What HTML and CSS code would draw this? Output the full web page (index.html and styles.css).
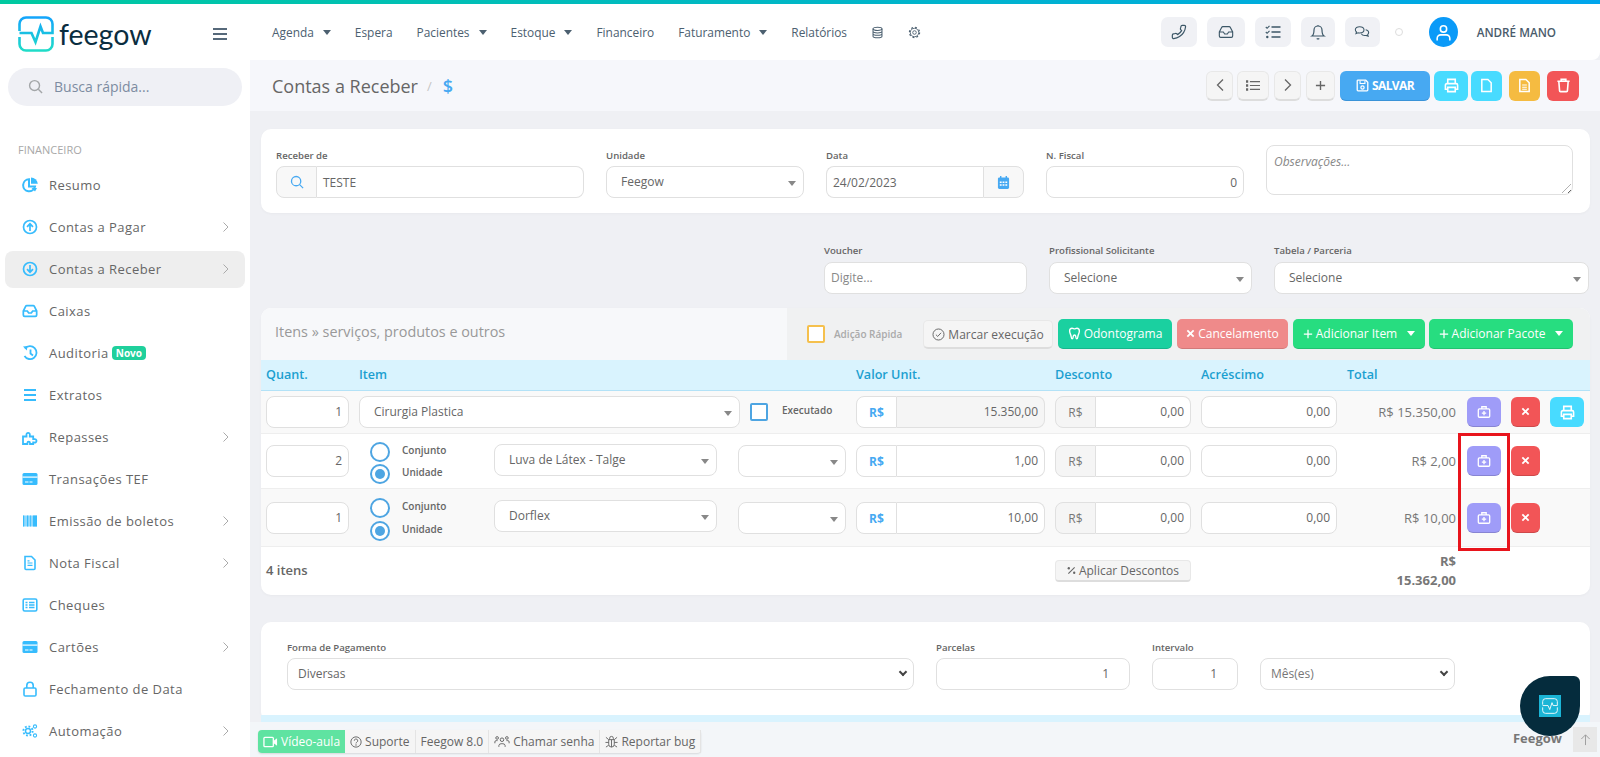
FILE: index.html
```html
<!DOCTYPE html>
<html lang="pt-BR">
<head>
<meta charset="utf-8">
<title>Contas a Receber - Feegow</title>
<link rel="stylesheet" href="styles.css">
</head>
<body>
<svg class="sprite" xmlns="http://www.w3.org/2000/svg">
  <defs>
    <linearGradient id="logo-grad" x1="0" y1="0" x2="0" y2="1"><stop offset="0" stop-color="#14a5fb"/><stop offset="1" stop-color="#1fdcc8"/></linearGradient>
  </defs>
  <symbol id="i-logo" viewBox="0 0 36 36"><path d="M1.5 15V8A6.5 6.5 0 0 1 8 1.5h20A6.5 6.5 0 0 1 34.500 8v9H25l-2.500-6.500L17.500 26l-4-9H1.500M1.500 21v7A6.500 6.500 0 0 0 8 34.500h20a6.500 6.500 0 0 0 6.500-6.500v-7"/></symbol>
  <symbol id="i-pie" viewBox="0 0 16 16"><path d="M7 2.200a6 6 0 1 0 6 7.300H7z" fill="none" stroke="currentColor" stroke-width="2"/><path d="M9 .5v6.200h6.800A7 7 0 0 0 9 .5z" fill="currentColor"/><path d="M9.500 11h5.500l-2 3.500z" fill="currentColor"/></symbol>
  <symbol id="i-up" viewBox="0 0 16 16"><circle cx="8" cy="8" r="6.500" fill="none" stroke="currentColor" stroke-width="1.700"/><path d="M8 12V5M5 7.800 8 4.800l3 3" fill="none" stroke="currentColor" stroke-width="1.700"/></symbol>
  <symbol id="i-down" viewBox="0 0 16 16"><circle cx="8" cy="8" r="6.500" fill="none" stroke="currentColor" stroke-width="1.700"/><path d="M8 4v7M5 8.200l3 3 3-3" fill="none" stroke="currentColor" stroke-width="1.700"/></symbol>
  <symbol id="i-inbox" viewBox="0 0 24 24"><path d="M22 12h-6l-2 3h-4l-2-3H2M5.450 5.110 2 12v6a2 2 0 0 0 2 2h16a2 2 0 0 0 2-2v-6l-3.450-6.890A2 2 0 0 0 16.760 4H7.240a2 2 0 0 0-1.790 1.110z" fill="none" stroke="currentColor" stroke-width="2.600"/></symbol>
  <symbol id="i-history" viewBox="0 0 16 16"><path d="M3 3.500A6.500 6.500 0 1 1 2.500 11" fill="none" stroke="currentColor" stroke-width="1.800"/><path d="M1 1.500 5.500 1 4.800 5.500z" fill="currentColor"/><path d="M8.500 4.500V8.500L11 10.500" fill="none" stroke="currentColor" stroke-width="1.800"/></symbol>
  <symbol id="i-bars" viewBox="0 0 16 16"><path d="M2 3h12M2 8h12M2 13h12" fill="none" stroke="currentColor" stroke-width="2"/></symbol>
  <symbol id="i-puzzle" viewBox="0 0 16 16"><path d="M1 7.500h3.500V6a1.700 1.700 0 1 1 3.300 0v1.500h3.400v2.700h1.200a1.700 1.700 0 1 1 0 3.300h-1.200V15H8V14a1.300 1.300 0 1 0-2.600 0v1H1z" fill="none" stroke="currentColor" stroke-width="1.800"/></symbol>
  <symbol id="i-card" viewBox="0 0 16 16"><rect x="0.500" y="2" width="15" height="12" rx="1.500" fill="currentColor"/><rect x="0.500" y="5.500" width="15" height="1.200" fill="#fff"/><rect x="3" y="10.500" width="3.500" height="1" fill="#fff"/><rect x="7.500" y="10.500" width="3" height="1" fill="#fff"/></symbol>
  <symbol id="i-barcode" viewBox="0 0 16 16"><rect x="1" y="2.500" width="14" height="11" fill="currentColor" opacity=".55"/><path d="M1 2.500h1.200v11H1zM5 2.500h1.200v11H5zM8 2.500h.8v11H8zM11 2.500h4v11h-4z" fill="currentColor"/></symbol>
  <symbol id="i-file" viewBox="0 0 16 16"><path d="M3 1.500h6.500L13 5v8.500a1 1 0 0 1-1 1H4a1 1 0 0 1-1-1z" fill="none" stroke="currentColor" stroke-width="1.600"/><path d="M5.500 8h5M5.500 10.300h5M5.500 5.800h2" fill="none" stroke="currentColor" stroke-width="1.200"/></symbol>
  <symbol id="i-listalt" viewBox="0 0 16 16"><rect x="1.200" y="2" width="13.600" height="12" rx="1.500" fill="none" stroke="currentColor" stroke-width="1.600"/><path d="M3.500 5.500h2M7 5.500h5.500M3.500 8h2M7 8h5.500M3.500 10.500h2M7 10.500h5.500" fill="none" stroke="currentColor" stroke-width="1.300"/></symbol>
  <symbol id="i-lock" viewBox="0 0 16 16"><rect x="2" y="7" width="12" height="8" rx="1.300" fill="none" stroke="currentColor" stroke-width="1.600"/><path d="M4.800 7V4.500a3.200 3.200 0 0 1 6.400 0V7" fill="none" stroke="currentColor" stroke-width="1.600"/></symbol>
  <symbol id="i-cogs" viewBox="0 0 16 16"><g fill="none" stroke="currentColor"><circle cx="6" cy="8" r="2.500" stroke-width="1.400"/><circle cx="6" cy="8" r="4.600" stroke-width="1.900" stroke-dasharray="1.800 1.800"/><circle cx="13" cy="3.500" r="1.600" stroke-width="1.100"/><circle cx="13" cy="12.500" r="1.600" stroke-width="1.100"/></g></symbol>
  <symbol id="i-chev" viewBox="0 0 8 12"><path d="M1.500 1.500 6 6l-4.500 4.500" fill="none" stroke="currentColor" stroke-width="1"/></symbol>
  <symbol id="i-search" viewBox="0 0 16 16"><circle cx="7" cy="7" r="5.300" fill="none" stroke="currentColor" stroke-width="1.500"/><path d="m11 11 4 4" fill="none" stroke="currentColor" stroke-width="1.500"/></symbol>
  <symbol id="i-phone" viewBox="0 0 24 24"><path transform="matrix(-1 0 0 1 24 0)" d="M22 16.920v3a2 2 0 0 1-2.180 2 19.790 19.790 0 0 1-8.630-3.070 19.500 19.500 0 0 1-6-6 19.790 19.790 0 0 1-3.070-8.670A2 2 0 0 1 4.110 2h3a2 2 0 0 1 2 1.720 12.840 12.840 0 0 0 .7 2.810 2 2 0 0 1-.45 2.110L8.090 9.910a16 16 0 0 0 6 6l1.270-1.270a2 2 0 0 1 2.110-.45 12.840 12.840 0 0 0 2.810.7A2 2 0 0 1 22 16.920z" fill="none" stroke="currentColor" stroke-width="1.800"/></symbol>
  <symbol id="i-inbox2" viewBox="0 0 24 24"><path d="M22 12h-6l-2 3h-4l-2-3H2M5.450 5.110 2 12v6a2 2 0 0 0 2 2h16a2 2 0 0 0 2-2v-6l-3.450-6.890A2 2 0 0 0 16.760 4H7.240a2 2 0 0 0-1.790 1.110z" fill="none" stroke="currentColor" stroke-width="1.700"/></symbol>
  <symbol id="i-tasks" viewBox="0 0 16 16"><path d="M6.500 3h9M6.500 8h9M6.500 13h9" fill="none" stroke="currentColor" stroke-width="1.300"/><path d="m.8 3 1.300 1.300L4.500 1.800M.8 8l1.300 1.300L4.500 6.800" fill="none" stroke="currentColor" stroke-width="1.100"/><circle cx="2.300" cy="13" r="1.200" fill="currentColor"/></symbol>
  <symbol id="i-bell" viewBox="0 0 24 24"><path d="M18 9A6 6 0 0 0 6 9c0 7-3 9-3 9h18s-3-2-3-9M13.730 21.500a2 2 0 0 1-3.460 0M12 3V1.500" fill="none" stroke="currentColor" stroke-width="1.800"/></symbol>
  <symbol id="i-chat" viewBox="0 0 24 24"><path d="M8.500 4C4.900 4 2 6 2 8.700c0 1.300.7 2.400 1.700 3.300L3 14.500l3-1.200c.8.200 1.600.3 2.500.3 3.600 0 6.500-2.100 6.500-4.900S12.100 4 8.500 4z" fill="none" stroke="currentColor" stroke-width="1.600"/><path d="M17.500 8.500c2.600.5 4.500 2.200 4.500 4.300 0 1.200-.6 2.200-1.500 3l.7 2.500-3-1.200c-2.700.5-6-.3-7.200-2.600" fill="none" stroke="currentColor" stroke-width="1.600"/></symbol>
  <symbol id="i-user" viewBox="0 0 24 24"><circle cx="12" cy="7.500" r="4" fill="none" stroke="currentColor" stroke-width="2"/><path d="M4 22v-2.500a4.500 4.500 0 0 1 4.500-4.500h7a4.500 4.500 0 0 1 4.500 4.500V22" fill="none" stroke="currentColor" stroke-width="2"/></symbol>
  <symbol id="i-db" viewBox="0 0 16 16"><g fill="none" stroke="currentColor" stroke-width="1.300"><ellipse cx="8" cy="3.500" rx="5.500" ry="2"/><path d="M2.500 3.500v9c0 1.100 2.500 2 5.500 2s5.500-.9 5.500-2v-9M2.500 6.500c0 1.100 2.500 2 5.500 2s5.500-.9 5.500-2M2.500 9.500c0 1.100 2.500 2 5.500 2s5.500-.9 5.500-2"/></g></symbol>
  <symbol id="i-gear" viewBox="0 0 16 16"><g fill="none" stroke="currentColor"><circle cx="8" cy="8" r="2.200" stroke-width="1.100"/><circle cx="8" cy="8" r="5.200" stroke-width="1.100"/><circle cx="8" cy="8" r="6.300" stroke-width="1.400" stroke-dasharray="2.300 2.650"/></g></symbol>
  <symbol id="i-prev" viewBox="0 0 10 14"><path d="M8 1.500 2.500 7 8 12.500" fill="none" stroke="currentColor" stroke-width="1.300"/></symbol>
  <symbol id="i-next" viewBox="0 0 10 14"><path d="M2 1.500 7.500 7 2 12.500" fill="none" stroke="currentColor" stroke-width="1.300"/></symbol>
  <symbol id="i-list" viewBox="0 0 16 12"><path d="M4.500 1.500H16M4.500 6H16M4.500 10.500H16" fill="none" stroke="currentColor" stroke-width="1.400"/><path d="M0 0h2.500v2.800H0zM0 4.600h2.500v2.800H0zM0 9.200h2.500V12H0z" fill="currentColor"/></symbol>
  <symbol id="i-plus" viewBox="0 0 12 12"><path d="M6 1v10M1 6h10" fill="none" stroke="currentColor" stroke-width="1.500"/></symbol>
  <symbol id="i-save" viewBox="0 0 16 16"><path d="M2 1.500h10l2.500 2.500v9.500a1 1 0 0 1-1 1h-11a1 1 0 0 1-1-1v-11a1 1 0 0 1 .5-1z" fill="none" stroke="currentColor" stroke-width="1.600"/><path d="M5 2v3.500h6V2" fill="none" stroke="currentColor" stroke-width="1.300"/><circle cx="8" cy="10.500" r="2" fill="none" stroke="currentColor" stroke-width="1.500"/></symbol>
  <symbol id="i-print" viewBox="0 0 16 16"><path d="M4 6V1.500h8V6M4 12H1.500V7.500a1.500 1.500 0 0 1 1.500-1.500h10a1.500 1.500 0 0 1 1.500 1.500V12H12M4 10h8v4.500H4z" fill="none" stroke="currentColor" stroke-width="1.700"/></symbol>
  <symbol id="i-doc" viewBox="0 0 16 16"><path d="M3 1.500h6.500L13 5v9.500H3z" fill="none" stroke="currentColor" stroke-width="1.600"/></symbol>
  <symbol id="i-doctext" viewBox="0 0 16 16"><path d="M3 1.500h6.500L13 5v9.500H3z" fill="none" stroke="currentColor" stroke-width="1.600"/><path d="M5.500 7.500h5M5.500 9.800h5M5.500 12h5" fill="none" stroke="currentColor" stroke-width="1.100"/></symbol>
  <symbol id="i-trash" viewBox="0 0 16 16"><path d="M1.500 3.500h13M5.500 3.500v-2h5v2M3 3.500l.8 10a1 1 0 0 0 1 1h6.400a1 1 0 0 0 1-1l.8-10" fill="none" stroke="currentColor" stroke-width="1.700"/></symbol>
  <symbol id="i-cal" viewBox="0 0 14 16"><rect x="1" y="2.500" width="12" height="12.500" rx="1.500" fill="currentColor"/><path d="M4 1v3M10 1v3" stroke="currentColor" stroke-width="1.500"/><path d="M3 7h2v1.500H3zM6 7h2v1.500H6zM9 7h2v1.500H9zM3 10h2v1.500H3zM6 10h2v1.500H6zM9 10h2v1.500H9z" fill="#fff"/></symbol>
  <symbol id="i-check" viewBox="0 0 16 16"><circle cx="8" cy="8" r="6.800" fill="none" stroke="currentColor" stroke-width="1.200"/><path d="m4.800 8.200 2.200 2.200 4.200-4.500" fill="none" stroke="currentColor" stroke-width="1.200"/></symbol>
  <symbol id="i-tooth" viewBox="0 0 14 16"><path d="M4 1.500C2 1.500 1 3 1 5c0 3 1.500 4 1.800 6.500.2 1.500.5 3 1.500 3s1-2 1.200-3.300c.2-1 .5-1.400 1.500-1.400s1.300.4 1.500 1.400c.2 1.300.2 3.300 1.200 3.300s1.300-1.500 1.500-3C11.500 9 13 8 13 5c0-2-1-3.500-3-3.500-1.500 0-2 .8-3 .8s-1.500-.8-3-.8z" fill="none" stroke="currentColor" stroke-width="1.700"/></symbol>
  <symbol id="i-x" viewBox="0 0 10 10"><path d="m1.500 1.500 7 7M8.500 1.500l-7 7" fill="none" stroke="currentColor" stroke-width="2"/></symbol>
  <symbol id="i-kit" viewBox="0 0 16 16"><rect x="1.500" y="4.500" width="13" height="9.500" rx="1.200" fill="none" stroke="currentColor" stroke-width="1.500"/><path d="M5.500 4.500V2h5v2.500M8 6.800v4.900M5.500 9.200h5" fill="none" stroke="currentColor" stroke-width="1.500"/></symbol>
  <symbol id="i-percent" viewBox="0 0 10 10"><path d="m1.500 8.500 7-7" fill="none" stroke="currentColor" stroke-width="1.200"/><circle cx="2" cy="2.500" r="1.300" fill="currentColor"/><circle cx="8" cy="7.500" r="1.300" fill="currentColor"/></symbol>
  <symbol id="i-video" viewBox="0 0 16 12"><rect x="1" y="1" width="10" height="10" rx="1" fill="none" stroke="currentColor" stroke-width="1.400"/><path d="m11 5 4-3v8l-4-3z" fill="currentColor"/></symbol>
  <symbol id="i-help" viewBox="0 0 14 14"><circle cx="7" cy="7" r="6" fill="none" stroke="currentColor" stroke-width="1.100"/><path d="M5 5.500a2 2 0 1 1 3 1.700c-.7.400-1 .8-1 1.500" fill="none" stroke="currentColor" stroke-width="1.100"/><circle cx="7" cy="10.500" r=".8" fill="currentColor"/></symbol>
  <symbol id="i-users" viewBox="0 0 18 14"><g fill="none" stroke="currentColor" stroke-width="1.100"><circle cx="9" cy="5" r="2"/><path d="M5.500 13v-1.500a2.500 2.500 0 0 1 2.500-2h2a2.500 2.500 0 0 1 2.500 2V13"/><circle cx="3.500" cy="3" r="1.500"/><circle cx="14.500" cy="3" r="1.500"/><path d="M1 9V7.500A1.500 1.500 0 0 1 2.500 6H4M17 9V7.500A1.500 1.500 0 0 0 15.500 6H14"/></g></symbol>
  <symbol id="i-bug" viewBox="0 0 14 14"><g fill="none" stroke="currentColor" stroke-width="1"><path d="M4 5h6v5a3 3 0 0 1-6 0zM5 5V3.500a2 2 0 0 1 4 0V5M7 5v8M1 2.500 4 5M13 2.500 10 5M.5 8H4M13.500 8H10M1 13l3-2M13 13l-3-2"/></g></symbol>
  <symbol id="i-arrowup" viewBox="0 0 12 14"><path d="M6 13V2M1.500 6.500 6 2l4.500 4.500" fill="none" stroke="currentColor" stroke-width="1"/></symbol>
</svg>

<div class="topline"></div>
<div class="shell">
  <aside class="sidebar">
    <div class="brand">
      <svg class="brand-logo"><use href="#i-logo"/></svg>
      <span class="brand-name">feegow</span>
      <span class="burger"><i></i><i></i><i></i></span>
    </div>
    <div class="quick-search">
      <svg class="quick-search-icon"><use href="#i-search"/></svg>
      <span>Busca rápida...</span>
    </div>
    <div class="side-title">FINANCEIRO</div>
    <nav class="side-menu">
      <a class="side-item"><svg class="side-icon"><use href="#i-pie"/></svg><span>Resumo</span></a>
      <a class="side-item"><svg class="side-icon"><use href="#i-up"/></svg><span>Contas a Pagar</span><svg class="side-chev"><use href="#i-chev"/></svg></a>
      <a class="side-item is-active"><svg class="side-icon"><use href="#i-down"/></svg><span>Contas a Receber</span><svg class="side-chev"><use href="#i-chev"/></svg></a>
      <a class="side-item"><svg class="side-icon"><use href="#i-inbox"/></svg><span>Caixas</span></a>
      <a class="side-item"><svg class="side-icon"><use href="#i-history"/></svg><span>Auditoria</span><b class="badge-new">Novo</b></a>
      <a class="side-item"><svg class="side-icon"><use href="#i-bars"/></svg><span>Extratos</span></a>
      <a class="side-item"><svg class="side-icon"><use href="#i-puzzle"/></svg><span>Repasses</span><svg class="side-chev"><use href="#i-chev"/></svg></a>
      <a class="side-item"><svg class="side-icon"><use href="#i-card"/></svg><span>Transações TEF</span></a>
      <a class="side-item"><svg class="side-icon"><use href="#i-barcode"/></svg><span>Emissão de boletos</span><svg class="side-chev"><use href="#i-chev"/></svg></a>
      <a class="side-item"><svg class="side-icon"><use href="#i-file"/></svg><span>Nota Fiscal</span><svg class="side-chev"><use href="#i-chev"/></svg></a>
      <a class="side-item"><svg class="side-icon"><use href="#i-listalt"/></svg><span>Cheques</span></a>
      <a class="side-item"><svg class="side-icon"><use href="#i-card"/></svg><span>Cartões</span><svg class="side-chev"><use href="#i-chev"/></svg></a>
      <a class="side-item"><svg class="side-icon"><use href="#i-lock"/></svg><span>Fechamento de Data</span></a>
      <a class="side-item"><svg class="side-icon"><use href="#i-cogs"/></svg><span>Automação</span><svg class="side-chev"><use href="#i-chev"/></svg></a>
    </nav>
  </aside>

  <main class="main">
    <header class="navbar">
      <nav class="nav-links">
        <a class="nav-link">Agenda<i class="tri"></i></a>
        <a class="nav-link">Espera</a>
        <a class="nav-link">Pacientes<i class="tri"></i></a>
        <a class="nav-link">Estoque<i class="tri"></i></a>
        <a class="nav-link">Financeiro</a>
        <a class="nav-link">Faturamento<i class="tri"></i></a>
        <a class="nav-link">Relatórios</a>
        <a class="nav-link"><svg class="nav-icon"><use href="#i-db"/></svg></a>
        <a class="nav-link"><svg class="nav-icon"><use href="#i-gear"/></svg></a>
      </nav>
      <div class="nav-right">
        <span class="tool-box w36"><svg><use href="#i-phone"/></svg></span>
        <span class="tool-box w38"><svg><use href="#i-inbox2"/></svg></span>
        <span class="tool-box w36"><svg><use href="#i-tasks"/></svg></span>
        <span class="tool-box w34"><svg><use href="#i-bell"/></svg></span>
        <span class="tool-box w35"><svg><use href="#i-chat"/></svg></span>
        <span class="status-dot"></span>
        <span class="avatar"><svg><use href="#i-user"/></svg></span>
        <span class="user-name">ANDRÉ MANO</span>
      </div>
    </header>

    <section class="page-head">
      <div class="crumbs"><h1>Contas a Receber</h1><span class="crumb-sep">/</span><span class="crumb-icon">$</span></div>
      <div class="page-actions">
        <button class="pa pa-light w27"><svg class="ic-nav"><use href="#i-prev"/></svg></button>
        <button class="pa pa-light w32 tuck-1"><svg class="ic-list"><use href="#i-list"/></svg></button>
        <button class="pa pa-light w27"><svg class="ic-nav"><use href="#i-next"/></svg></button>
        <button class="pa pa-light w29"><svg class="ic-plus"><use href="#i-plus"/></svg></button>
        <button class="pa pa-blue w90"><svg class="ic-13"><use href="#i-save"/></svg>SALVAR</button>
        <button class="pa pa-cyan w34 tuck-1"><svg class="ic-15"><use href="#i-print"/></svg></button>
        <button class="pa pa-cyan w31 tuck-2"><svg class="ic-15"><use href="#i-doc"/></svg></button>
        <button class="pa pa-amber w31 gap-l"><svg class="ic-15"><use href="#i-doctext"/></svg></button>
        <button class="pa pa-red w32 gap-l"><svg class="ic-15"><use href="#i-trash"/></svg></button>
      </div>
    </section>

    <div class="content">
      <section class="panel panel-top">
        <div class="fld"><label>Receber de</label>
          <div class="group"><span class="addon addon-search"><svg class="ic-14"><use href="#i-search"/></svg></span><div class="input grow">TESTE</div></div>
        </div>
        <div class="fld"><label>Unidade</label><div class="select">Feegow</div></div>
        <div class="fld"><label>Data</label>
          <div class="group"><div class="input grow">24/02/2023</div><span class="addon addon-cal"><svg class="ic-cal"><use href="#i-cal"/></svg></span></div>
        </div>
        <div class="fld"><label>N. Fiscal</label><div class="input right">0</div></div>
        <div class="textarea">Observações...</div>
      </section>

      <section class="filters">
        <div class="fld"><label>Voucher</label><div class="input placeholder">Digite...</div></div>
        <div class="fld"><label>Profissional Solicitante</label><div class="select">Selecione</div></div>
        <div class="fld"><label>Tabela / Parceria</label><div class="select">Selecione</div></div>
      </section>

      <section class="panel panel-items">
        <div class="items-head">
          <div class="items-title">Itens » serviços, produtos e outros</div>
          <div class="items-actions">
            <span class="quick-check"></span>
            <span class="quick-label">Adição Rápida</span>
            <button class="ib ib-light"><svg class="ic-13"><use href="#i-check"/></svg>Marcar execução</button>
            <button class="ib ib-teal"><svg class="ic-13"><use href="#i-tooth"/></svg>Odontograma</button>
            <button class="ib ib-rose"><svg class="ic-9"><use href="#i-x"/></svg>Cancelamento</button>
            <button class="ib ib-green w-item"><svg class="ic-10"><use href="#i-plus"/></svg>Adicionar Item<i class="tri tri-white"></i></button>
            <button class="ib ib-green w-pack"><svg class="ic-10"><use href="#i-plus"/></svg>Adicionar Pacote<i class="tri tri-white"></i></button>
          </div>
        </div>

        <div class="grid-row items-thead">
          <span>Quant.</span><span>Item</span><span>Valor Unit.</span><span>Desconto</span><span>Acréscimo</span><span>Total</span>
        </div>

        <div class="grid-row line line-a">
          <div class="input right">1</div>
          <div class="cell-item">
            <div class="select grow">Cirurgia Plastica</div>
            <span class="exec-check"></span>
            <span class="exec-label">Executado</span>
          </div>
          <div class="group"><span class="addon addon-rs">R$</span><div class="input right grow is-disabled">15.350,00</div></div>
          <div class="group"><span class="addon addon-gray">R$</span><div class="input right grow">0,00</div></div>
          <div class="input right">0,00</div>
          <div class="total">R$ 15.350,00</div>
          <div class="row-actions">
            <button class="rb rb-purple"><svg class="ic-14"><use href="#i-kit"/></svg></button>
            <button class="rb rb-red"><svg class="ic-9"><use href="#i-x"/></svg></button>
            <button class="rb rb-cyan"><svg class="ic-15"><use href="#i-print"/></svg></button>
          </div>
        </div>

        <div class="grid-row line line-b">
          <div class="input right">2</div>
          <div class="cell-product">
            <div class="radios">
              <div class="radio-line"><span class="radio"></span><span class="radio-label">Conjunto</span></div>
              <div class="radio-line"><span class="radio is-on"></span><span class="radio-label">Unidade</span></div>
            </div>
            <div class="select prod">Luva de Látex - Talge</div>
            <div class="select small"></div>
          </div>
          <div class="group"><span class="addon addon-rs">R$</span><div class="input right grow">1,00</div></div>
          <div class="group"><span class="addon addon-gray">R$</span><div class="input right grow">0,00</div></div>
          <div class="input right">0,00</div>
          <div class="total">R$ 2,00</div>
          <div class="row-actions">
            <button class="rb rb-purple"><svg class="ic-14"><use href="#i-kit"/></svg></button>
            <button class="rb rb-red"><svg class="ic-9"><use href="#i-x"/></svg></button>
          </div>
        </div>

        <div class="grid-row line line-c">
          <div class="input right">1</div>
          <div class="cell-product">
            <div class="radios">
              <div class="radio-line"><span class="radio"></span><span class="radio-label">Conjunto</span></div>
              <div class="radio-line"><span class="radio is-on"></span><span class="radio-label">Unidade</span></div>
            </div>
            <div class="select prod">Dorflex</div>
            <div class="select small"></div>
          </div>
          <div class="group"><span class="addon addon-rs">R$</span><div class="input right grow">10,00</div></div>
          <div class="group"><span class="addon addon-gray">R$</span><div class="input right grow">0,00</div></div>
          <div class="input right">0,00</div>
          <div class="total">R$ 10,00</div>
          <div class="row-actions">
            <button class="rb rb-purple"><svg class="ic-14"><use href="#i-kit"/></svg></button>
            <button class="rb rb-red"><svg class="ic-9"><use href="#i-x"/></svg></button>
          </div>
        </div>

        <div class="grid-row items-foot">
          <div class="count">4 itens</div>
          <div></div><div></div>
          <button class="apply"><svg class="ic-9"><use href="#i-percent"/></svg>Aplicar Descontos</button>
          <div></div>
          <div class="grand">R$<br>15.362,00</div>
        </div>

        <div class="highlight"></div>
      </section>

      <section class="panel panel-pay">
        <div class="pay-fields">
          <div class="fld"><label>Forma de Pagamento</label><div class="select native">Diversas</div></div>
          <div class="fld"><label>Parcelas</label><div class="input right pad-r">1</div></div>
          <div class="fld"><label>Intervalo</label><div class="input right pad-r">1</div></div>
          <div class="fld"><label class="label-blank">&nbsp;</label><div class="select native muted">Mês(es)</div></div>
        </div>
        <div class="pay-strip"></div>
      </section>
    </div>
  </main>
</div>

<footer class="statusbar">
  <div class="status-group">
    <a class="sb sb-video"><svg class="ic-video"><use href="#i-video"/></svg>Vídeo-aula</a>
    <a class="sb"><svg class="ic-12"><use href="#i-help"/></svg>Suporte</a>
    <a class="sb">Feegow 8.0</a>
    <a class="sb"><svg class="ic-users"><use href="#i-users"/></svg>Chamar senha</a>
    <a class="sb"><svg class="ic-13 "><use href="#i-bug"/></svg>Reportar bug</a>
  </div>
  <div class="status-right">
    <span class="status-brand">Feegow</span>
    <span class="to-top"><svg class="ic-13"><use href="#i-arrowup"/></svg></span>
  </div>
</footer>

<div class="chat-bubble"><span class="chat-square"><svg><use href="#i-logo"/></svg></span></div>
</body>
</html>
```

FILE: styles.css
```css
* { box-sizing: border-box; }
html, body { margin: 0; height: 100%; overflow: hidden; }
body { font-family: "Open Sans", "Liberation Sans", sans-serif; font-size: 12px; color: #666; background: #eff0f4; }
.sprite { width: 0; height: 0; position: absolute; }
button { font-family: inherit; border: 0; padding: 0; cursor: pointer; }
label { display: block; }
svg { display: block; flex: none; }

.topline { height: 4px; background: linear-gradient(90deg, #00c9a0, #00a5ec); }
.shell { display: grid; grid-template-columns: 250px 1fr; height: 753px; }

/* sidebar */
.sidebar { background: #fff; }
.brand { display: flex; align-items: center; height: 64px; padding: 0 0 4px 18px; }
.brand-logo { width: 36px; height: 36px; fill: none; stroke: url(#logo-grad); stroke-width: 2.6; }
.brand-name { font-family: Lato, "Open Sans", sans-serif; font-size: 28.5px; color: #0a2d40; margin-left: 5px; line-height: 36px; width: 154px; }
.burger { display: flex; flex-direction: column; gap: 3px; width: 14px; }
.burger i { display: block; height: 2px; background: #56697a; }
.quick-search { display: flex; align-items: center; gap: 11px; height: 38px; margin: 0 8px; padding: 0 0 1px 20px; background: #eff0f5; border-radius: 19px; font-size: 14px; color: #7d8ca1; }
.quick-search-icon { width: 15px; height: 15px; color: #a3a6a8; }
.side-title { margin: 36px 0 10px 18px; line-height: 15px; font-size: 11px; color: #a8a8a8; }
.side-menu { display: flex; flex-direction: column; gap: 5px; margin: 0 5px; }
.side-item { display: flex; align-items: center; height: 37px; padding: 0 15px 2px 17px; border-radius: 8px; font-size: 13px; letter-spacing: .45px; color: #666; }
.side-item.is-active { background: #eee; }
.side-icon { width: 16px; height: 16px; margin-right: 11px; color: #37bcfd; }
.side-chev { width: 8px; height: 12px; margin-left: auto; color: #aaa; }
.badge-new { margin-left: 3px; padding: 0 4px; height: 14px; line-height: 14px; border-radius: 4px; background: #1fd09c; color: #fff; font-size: 10px; font-weight: 700; letter-spacing: 0; }

/* navbar */
.navbar { display: flex; align-items: center; height: 56px; padding: 0 44px 0 22px; background: #fff; border-bottom-right-radius: 8px; }
.nav-links { display: flex; align-items: center; gap: 24px; }
.nav-link { display: flex; align-items: center; font-size: 11.9px; color: #4c6070; }
.nav-icon { width: 13px; height: 13px; }
.tri { width: 0; height: 0; margin-left: 9px; border: 4px solid transparent; border-top: 5px solid #4c6070; border-bottom: 0; }
.tri-white { border-top-color: #fff; }
.nav-right { display: flex; align-items: center; margin-left: auto; }
.tool-box { display: flex; align-items: center; justify-content: center; height: 30px; margin-right: 10px; border-radius: 7px; background: #f0f1f5; color: #3c5767; }
.tool-box svg { width: 16px; height: 16px; }
.w36 { width: 36px; } .w38 { width: 38px; } .w34 { width: 34px; } .w35 { width: 35px; }
.status-dot { width: 8px; height: 8px; margin: 0 26px 0 5px; border: 1px solid #ddd; border-radius: 50%; }
.avatar { display: flex; align-items: center; justify-content: center; width: 29px; height: 30px; margin-right: 19px; border-radius: 50%; background: #0a9af8; color: #fff; }
.avatar svg { width: 19px; height: 19px; }
.user-name { font-weight: 600; font-size: 11.7px; color: #4a5b6b; }

/* page header */
.page-head { display: flex; align-items: center; justify-content: space-between; height: 51px; padding: 0 21px 0 22px; background: #f6f7fb; }
.crumbs { display: flex; align-items: center; }
.crumbs h1 { margin: 0; font-size: 18px; font-weight: 400; color: #666; }
.crumb-sep { margin: 0 11px 0 9px; color: #c5c5c5; font-size: 13px; }
.crumb-icon { color: #47a9f2; font-size: 18px; font-weight: 600; }
.page-actions { display: flex; gap: 5px; }
.pa { display: flex; align-items: center; justify-content: center; gap: 3px; height: 30px; border-radius: 6px; color: #fff; font-size: 12px; font-weight: 700; }
.pa-light { background: #f5f5f5; color: #666; border: 1px solid #e8e8e8; border-bottom: 2px solid #ddd; }
.pa-blue { background: #47a9f2; border-bottom: 1px solid #3a93d8; letter-spacing: -.6px; }
.pa-cyan { background: #48dbff; }
.pa-amber { background: #f5bb41; }
.pa-red { background: #f25557; }
.tuck-1 { margin-left: -1px; } .tuck-2 { margin-left: -2px; }
.gap-l { margin-left: 2px; }
.w27 { width: 27px; } .w32 { width: 32px; } .w29 { width: 29px; } .w90 { width: 90px; } .w31 { width: 31px; }
.ic-nav { width: 10px; height: 14px; } .ic-list { width: 14px; height: 11px; } .ic-plus { width: 11px; height: 11px; }
.ic-15 { width: 15px; height: 15px; } .ic-14 { width: 14px; height: 14px; } .ic-13 { width: 13px; height: 13px; }
.ic-12 { width: 12px; height: 12px; } .ic-10 { width: 10px; height: 10px; } .ic-9 { width: 9px; height: 9px; }
.ic-cal { width: 13px; height: 15px; }
.ic-video { width: 15px; height: 12px; } .ic-users { width: 16px; height: 13px; }

/* content */
.content { padding: 18px 10px 0 11px; }
.panel { background: #fff; border-radius: 10px; box-shadow: 0 1px 3px rgba(0, 0, 0, .03); }
.fld label { height: 15px; line-height: 15px; margin-bottom: 4px; font-size: 9.6px; font-weight: 600; color: #666; }
.input, .select, .textarea { height: 32px; line-height: 30px; background: #fff; border: 1px solid #e0e0e0; border-radius: 8px; padding: 0 6px; font-size: 12px; color: #666; }
.right { text-align: right; }
.grow { flex: 1; min-width: 0; }
.placeholder { color: #888; }
.pad-r { padding-right: 20px; }
.is-disabled { background: #f5f5f5; }
.select { position: relative; padding-left: 14px; white-space: nowrap; }
.select::after { content: ""; position: absolute; right: 7px; top: 14px; border: 4px solid transparent; border-top: 5px solid #888; border-bottom: 0; }
.select.native { padding-left: 10px; }
.select.native::after { right: 7px; top: 10px; width: 4px; height: 4px; border: 0; border-right: 2px solid #444; border-bottom: 2px solid #444; transform: rotate(45deg); }
.select.muted { color: #777; }
.textarea { position: relative; height: 50px; line-height: 18px; padding: 7px; font-style: italic; color: #888; margin-top: -3px; }
.textarea::after { content: ""; position: absolute; right: 1px; bottom: 1px; width: 9px; height: 9px; background: repeating-linear-gradient(135deg, transparent 0 2px, #666 2px 3px, transparent 3px 4px); clip-path: polygon(100% 0, 100% 100%, 0 100%); }
.group { display: flex; height: 32px; }
.group .input { border-radius: 0 8px 8px 0; border-left: 0; }
.group .addon:last-child { border-radius: 0 8px 8px 0; border-left: 1px solid #e0e0e0; border-right: 1px solid #e0e0e0; }
.group .input:first-child { border-radius: 8px 0 0 8px; border-left: 1px solid #e0e0e0; border-right: 0; }
.addon { display: flex; align-items: center; justify-content: center; flex: none; height: 32px; width: 41px; border: 1px solid #e0e0e0; border-radius: 8px 0 0 8px; background: #f8f8f8; font-size: 12px; color: #777; }
.addon-search { color: #47a9f2; }
.addon-cal { color: #47a9f2; }
.addon-rs { background: #fff; color: #47a9f2; font-weight: 700; }
.addon-gray { background: #f5f5f5; }

.panel-top { display: grid; grid-template-columns: 308px 198px 198px 198px 307px; column-gap: 22px; height: 84px; padding: 19px 0 0 15px; align-items: start; }
.panel-top label { margin-bottom: 3px; }
.panel-top .input { line-height: 32px; }
.filters { display: grid; grid-template-columns: 203px 203px 315px; column-gap: 22px; justify-content: end; margin-top: 30px; padding-right: 1px; height: 65px; }

/* items */
.panel-items { position: relative; height: 287px; }
.items-head { display: flex; height: 52px; }
.items-title { width: 526px; padding: 14px 0 0 14px; background: #f7f8fa; border-top-left-radius: 10px; font-size: 14.4px; line-height: 20px; color: #999; }
.items-actions { flex: 1; display: flex; align-items: flex-start; padding: 11px 0 0 20px; background: #f0f1f2; border-top-right-radius: 10px; }
.quick-check { width: 18px; height: 18px; margin-top: 6px; background: #fff; border: 2px solid #f5c04d; border-radius: 2px; }
.quick-label { width: 88px; margin: 8px 0 0 9px; font-size: 10px; font-weight: 600; line-height: 14px; color: #aaa; }
.ib { display: flex; align-items: center; justify-content: center; gap: 3px; height: 30px; margin-right: 4px; border-radius: 5px; color: #fff; font-size: 12px; font-weight: 500; white-space: nowrap; border-bottom: 1px solid rgba(0, 0, 0, .12); }
.ib-light { width: 130px; height: 29px; margin: 1px 5px 0 1px; background: #f5f5f5; color: #666; font-weight: 400; border: 1px solid #e8e8e8; border-bottom: 2px solid #ddd; }
.ib-teal { width: 114px; margin-right: 5px; background: #1ad0a0; }
.ib-rose { width: 111px; margin-right: 5px; background: #ef8a8a; }
.ib-green { background: #27dd80; }
.w-item { width: 132px; } .w-pack { width: 144px; margin-right: 0; }
.ib .tri { margin-left: 7px; }

.grid-row { display: grid; grid-template-columns: 83px 487px 189px 136px 136px 109px 1fr; column-gap: 10px; padding-left: 5px; align-items: start; }
.items-thead { height: 31px; line-height: 29px; background: #d9f3fe; border-bottom: 1px solid #b3e2f7; font-size: 12.6px; font-weight: 600; color: #1c9fd0; }
.line { border-bottom: 1px solid #eee; }
.line-a { height: 43px; padding-top: 5px; background: #f9f9f9; }
.line-b { height: 55px; padding-top: 11px; }
.line-c { height: 58px; padding-top: 13px; background: #f9f9f9; }
.cell-item { display: flex; align-items: flex-start; }
.exec-check { width: 18px; height: 18px; margin: 7px 0 0 10px; background: #fff; border: 2px solid #4ea5e2; border-radius: 2px; }
.exec-label { width: 64px; margin: 7px 0 0 14px; font-size: 10px; font-weight: 600; line-height: 14px; color: #666; }
.cell-product { display: flex; align-items: flex-start; }
.radios { display: flex; flex-direction: column; gap: 2px; width: 124px; margin: -3px 0 0 11px; }
.line-c .radios { gap: 3px; margin-top: -4px; }
.radio-line { display: flex; align-items: flex-start; height: 20px; }
.radio { position: relative; width: 20px; height: 20px; border: 2px solid #4ea5e2; border-radius: 50%; background: #fff; }
.radio.is-on::after { content: ""; position: absolute; left: 3px; top: 3px; width: 10px; height: 10px; border-radius: 50%; background: #4ea5e2; }
.radio-label { width: 60px; margin: 0 0 0 12px; font-size: 10px; font-weight: 600; line-height: 17px; color: #666; }
.select.prod { width: 223px; margin-top: -1px; }
.line-c .select.prod { margin-top: -2px; }
.select.small { width: 108px; margin-left: 21px; }
.total { line-height: 32px; text-align: right; color: #777; font-size: 13px; }
.row-actions { display: flex; gap: 10px; margin: 1px 0 0 1px; }
.rb { display: flex; align-items: center; justify-content: center; width: 34px; height: 30px; border-radius: 6px; color: #fff; border-bottom: 1px solid rgba(0, 0, 0, .15); }
.rb-purple { background: #9f9cf8; }
.rb-red { width: 29px; background: #f25557; }
.rb-cyan { background: #48dbff; border-bottom: 0; }
.items-foot { height: 49px; }
.count { margin-top: 13px; font-size: 13px; font-weight: 600; line-height: 20px; color: #666; white-space: nowrap; }
.apply { display: flex; align-items: center; justify-content: center; gap: 3px; height: 22px; margin-top: 13px; background: #f5f5f5; color: #666; font-size: 12px; border: 1px solid #e8e8e8; border-bottom: 2px solid #ddd; border-radius: 4px; }
.grand { margin-top: 5px; text-align: right; font-size: 13px; font-weight: 700; line-height: 19px; color: #777; }
.highlight { position: absolute; left: 1197px; top: 125px; width: 52px; height: 118px; border: 3px solid #e8141c; pointer-events: none; }

/* payment */
.panel-pay { margin-top: 27px; height: 100px; }
.pay-fields { display: grid; grid-template-columns: 627px 194px 86px 195px; column-gap: 22px; height: 93px; padding: 18px 0 0 26px; }
.pay-fields label { margin-bottom: 3px; }
.pay-strip { height: 7px; background: #d9f3fe; }

/* status bar */
.statusbar { position: fixed; left: 250px; right: 0; bottom: 0; display: flex; justify-content: space-between; height: 35px; background: #f3f6f9; }
.status-group { display: flex; height: 23px; margin: 8px 0 0 8px; border-radius: 4px; background: #f5f5f5; box-shadow: 0 1px 2px rgba(0, 0, 0, .12); }
.sb { display: flex; align-items: center; gap: 3px; padding: 0 5px; font-size: 12px; color: #666; border-right: 1px solid #e4e4e4; white-space: nowrap; }
.sb-video { background: #5fe3a1; color: #fff; border-right: 0; border-radius: 4px 0 0 4px; }
.status-right { display: flex; align-items: flex-start; padding-right: 3px; }
.status-brand { margin: 7px 11px 0 0; font-size: 13px; font-weight: 700; color: #777; line-height: 19px; }
.to-top { display: flex; align-items: center; justify-content: center; width: 24px; height: 25px; margin-top: 5px; background: #e8e8e8; color: #999; }

.chat-bubble { position: fixed; left: 1520px; top: 676px; display: flex; align-items: center; justify-content: center; width: 60px; height: 60px; background: #052c3d; border-radius: 50% 6px 50% 50%; }
.chat-square { display: flex; align-items: center; justify-content: center; width: 22px; height: 22px; background: #1bb5d6; }
.chat-square svg { width: 16px; height: 16px; fill: none; stroke: #fff; stroke-width: 2; }
```
